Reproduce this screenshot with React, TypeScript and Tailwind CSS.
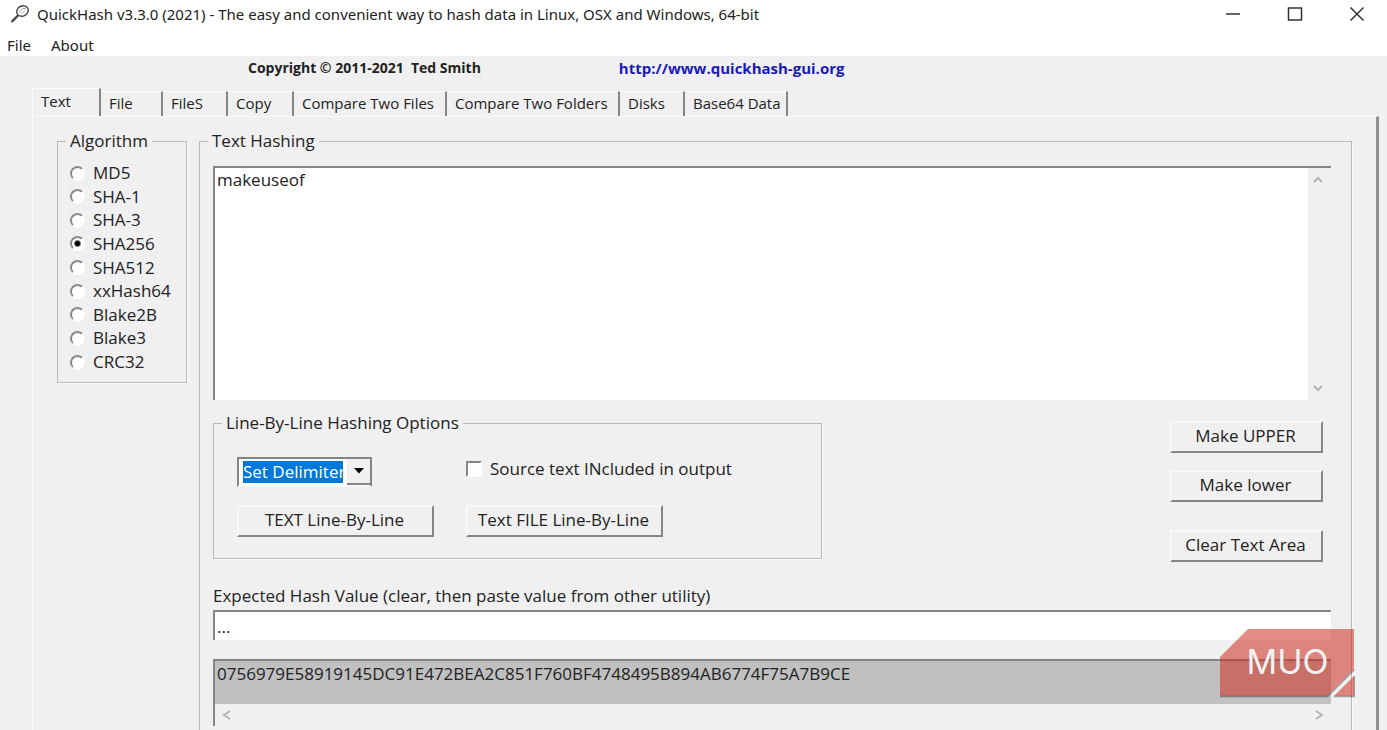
import type { ReactNode } from 'react'

const ALGORITHMS = ['MD5', 'SHA-1', 'SHA-3', 'SHA256', 'SHA512', 'xxHash64', 'Blake2B', 'Blake3', 'CRC32']

// widths are fixed per tab, short labels don't shrink
const TABS = [
  { label: 'File', width: 'w-[62px]' },
  { label: 'FileS', width: 'w-[65px]' },
  { label: 'Copy', width: 'w-[66px]' },
  { label: 'Compare Two Files', width: 'w-[153px]' },
  { label: 'Compare Two Folders', width: 'w-[173px]' },
  { label: 'Disks', width: 'w-[65px]' },
  { label: 'Base64 Data', width: 'w-[103px]' },
]

function Chevron({ d }: { d: string }) {
  return (
    <svg width="12" height="12" viewBox="0 0 12 12" fill="none" stroke="#b4b4b4" strokeWidth="2" aria-hidden="true">
      <path d={d} />
    </svg>
  )
}

function PushButton({ children }: { children: ReactNode }) {
  return (
    <button
      type="button"
      className="h-8 w-full border-2 border-t-[#f8f8f8] border-l-[#f8f8f8] border-r-[#858585] border-b-[#858585] pr-0.5 pb-0.5 text-center leading-5 whitespace-nowrap"
    >
      {children}
    </button>
  )
}

function GroupBox({ title, className, children }: { title: string; className: string; children: ReactNode }) {
  return (
    <fieldset className={`min-w-0 border border-[#b8b8b8] shadow-[1px_1px_0_#fafafa] ${className}`}>
      <legend className="ml-2 px-1 leading-5 whitespace-nowrap">{title}</legend>
      {children}
    </fieldset>
  )
}

function TitleBar() {
  return (
    <header className="bg-white font-['Noto_Sans',sans-serif]">
      <div className="flex h-7 items-center pl-2.5">
        <svg width="20" height="20" viewBox="0 0 20 20" fill="none" stroke="#444" aria-hidden="true">
          <ellipse cx="12.5" cy="7" rx="6" ry="5" transform="rotate(-30 12.5 7)" strokeWidth="1.4" />
          <path d="M9.5 8.5c1-3 4-5 6.500-3.500M12 9.500l3-3" strokeWidth="1" stroke="#999" />
          <path d="M8 11.500L1.500 18" strokeWidth="2.400" />
        </svg>
        <h1 className="ml-[7px] flex-1 text-[15px] leading-5 whitespace-nowrap">
          QuickHash v3.3.0 (2021) - The easy and convenient way to hash data in Linux, OSX and Windows, 64-bit
        </h1>
        <div className="flex pr-[7px]">
          <button type="button" aria-label="Minimize" className="flex w-[62px] justify-end pr-[15px]">
            <svg width="16" height="16" viewBox="0 0 16 16" stroke="#333" strokeWidth="1.500"><path d="M1 8h14" /></svg>
          </button>
          <button type="button" aria-label="Maximize" className="flex w-[62px] justify-end pr-[15px]">
            <svg width="16" height="16" viewBox="0 0 16 16" fill="none" stroke="#333" strokeWidth="1.500"><path d="M1.500 2h13v12h-13z" /></svg>
          </button>
          <button type="button" aria-label="Close" className="flex w-[62px] justify-end pr-[15px]">
            <svg width="16" height="16" viewBox="0 0 16 16" stroke="#333" strokeWidth="1.500"><path d="M1.500 1.500l13 13M14.500 1.500l-13 13" /></svg>
          </button>
        </div>
      </div>
      <nav className="flex h-7 items-center gap-5 pt-1.5 pl-[7px] text-[15px] leading-5">
        <button type="button">File</button>
        <button type="button">About</button>
      </nav>
    </header>
  )
}

function AlgorithmBox() {
  return (
    <GroupBox title="Algorithm" className="w-[130px] shrink-0">
      <div className="flex h-[231px] flex-col justify-between px-3 pt-3 pb-2.5">
        {ALGORITHMS.map((name) => (
          <label key={name} className="flex h-5 items-center gap-2 leading-5">
            <input
              type="radio"
              name="algorithm"
              value={name}
              defaultChecked={name === 'SHA256'}
              className="size-[15px] shrink-0 appearance-none rounded-full border-2 border-t-[#8a8a8a] border-r-white border-b-white border-l-[#8a8a8a] bg-white checked:bg-[radial-gradient(circle,#000_2px,#fff_4px)]"
            />
            {name}
          </label>
        ))}
      </div>
    </GroupBox>
  )
}

function LineOptions() {
  return (
    <GroupBox title="Line-By-Line Hashing Options" className="w-[609px]">
      <div className="grid grid-cols-[197px_197px] gap-x-8 gap-y-[18px] pt-6 pb-[21px] pl-[23px]">
        <div className="flex h-[30px] w-[135px] border-2 border-[#858585] border-b-[#f8f8f8] bg-white">
          <select
            aria-label="Delimiter"
            className="my-0.5 ml-1 h-[22px] w-[100px] appearance-none overflow-hidden bg-[#0078d7] leading-5 whitespace-nowrap text-white"
          >
            <option>Set Delimiter</option>
          </select>
          <span className="pointer-events-none ml-1 flex flex-1 items-center justify-center border-b-2 border-[#858585] bg-[#f0f0f0]">
            <svg width="10" height="6" viewBox="0 0 10 6" aria-hidden="true"><path d="M0 0h10L5 5.500z" fill="#000" /></svg>
          </span>
        </div>
        <label className="flex h-6 items-center gap-2 leading-5 whitespace-nowrap">
          <input
            type="checkbox"
            className="size-4 shrink-0 appearance-none border-2 border-t-[#858585] border-r-white border-b-white border-l-[#858585] bg-white checked:bg-[#0078d7]"
          />
          Source text INcluded in output
        </label>
        <PushButton>TEXT Line-By-Line</PushButton>
        <PushButton>Text FILE Line-By-Line</PushButton>
      </div>
    </GroupBox>
  )
}

function TextHashing() {
  return (
    <GroupBox title="Text Hashing" className="flex-1 border-b-0">
      <div className="pt-[15px] pr-5 pl-[13px]">
        <div className="flex h-[234px] border-t-2 border-l-2 border-[#858585] bg-white">
          <textarea
            aria-label="Text to hash"
            defaultValue="makeuseof"
            className="flex-1 resize-none bg-white px-0.5 py-0.5 leading-5 outline-none"
          />
          <div className="flex w-[23px] flex-col items-center justify-between bg-[#f0f0f0] py-1.5 pr-1">
            <Chevron d="M2 8l4-4 4 4" />
            <Chevron d="M2 4l4 4 4-4" />
          </div>
        </div>

        <div className="mt-[13px] flex items-start justify-between">
          <LineOptions />
          <div className="mr-2 flex w-[153px] flex-col pt-2">
            <PushButton>Make UPPER</PushButton>
            <div className="mt-[17px]"><PushButton>Make lower</PushButton></div>
            <div className="mt-7"><PushButton>Clear Text Area</PushButton></div>
          </div>
        </div>

        <div className="mt-6 flex flex-col">
          <label htmlFor="expected" className="leading-5">
            Expected Hash Value (clear, then paste value from other utility)
          </label>
          <input
            id="expected"
            type="text"
            defaultValue="..."
            className="mt-1 h-[30px] border-t-2 border-l-2 border-[#858585] bg-white px-0.5 leading-5 outline-none"
          />
        </div>

        <div className="mt-[19px] border-t-2 border-l-2 border-[#858585]">
          <output className="block h-[43px] bg-[#c0c0c0] px-0.5 py-[3px] leading-5">
            0756979E58919145DC91E472BEA2C851F760BF4748495B894AB6774F75A7B9CE
          </output>
          <div className="flex h-[22px] items-center justify-between px-1.5">
            <Chevron d="M9 2L3 6l6 4" />
            <Chevron d="M3 2l6 4-6 4" />
          </div>
        </div>
      </div>
    </GroupBox>
  )
}

function Watermark() {
  return (
    <div className="absolute right-8 bottom-8 flex h-[69px] w-[135px] items-center justify-center">
      <svg className="absolute inset-0" width="135" height="69" viewBox="0 0 135 69" fill="none" aria-hidden="true">
        <path d="M0 28L28 0h106v40l-27 27H0zM134 47v20h-20z" fill="rgb(205,44,31)" fillOpacity="0.55" />
        <path d="M0 67.500h107.500L134.500 40.500M114 67.500h20.500V47" stroke="#000" strokeOpacity="0.35" strokeWidth="1.500" />
      </svg>
      <span className="relative pb-1 font-[Inter,sans-serif] text-[34px] leading-[64px] font-normal text-[#f2f2f2]">MUO</span>
    </div>
  )
}

export default function App() {
  return (
    <div className="relative flex h-screen flex-col overflow-hidden bg-[#f0f0f0] font-['Open_Sans',sans-serif] text-[17px] text-[#222]">
      <TitleBar />
      <div className="flex h-8 shrink-0 gap-[138px] pt-0.5 pl-[248px] leading-5 font-bold whitespace-pre">
        <p className="text-[14px]">Copyright © 2011-2021  Ted Smith</p>
        <a href="http://www.quickhash-gui.org" className="text-[15px] text-[#1a1ab8]">http://www.quickhash-gui.org</a>
      </div>

      <main className="flex flex-1 flex-col pr-2 pl-8">
        <div role="tablist" className="flex h-7 items-end text-[15px]">
          <button
            type="button"
            role="tab"
            aria-selected="true"
            className="h-7 w-[69px] border-t border-r-2 border-l border-t-[#fafafa] border-r-[#858585] border-l-[#fafafa] pb-1 pl-2 text-left leading-5"
          >
            Text
          </button>
          {TABS.map((tab) => (
            <button
              key={tab.label}
              type="button"
              role="tab"
              aria-selected="false"
              className={`h-[25px] shrink-0 border-t border-r-2 border-t-[#fafafa] border-r-[#858585] pb-0.5 pl-2 text-left leading-5 whitespace-nowrap ${tab.width}`}
            >
              {tab.label}
            </button>
          ))}
        </div>
        <div role="tabpanel" className="flex flex-1 items-start gap-3 border-t border-r-3 border-l border-t-[#fafafa] border-r-[#8f8f8f] border-l-[#fafafa] px-6 pt-3.5">
          <AlgorithmBox />
          <div className="flex min-w-0 flex-1 self-stretch">
            <TextHashing />
          </div>
        </div>
      </main>
      <Watermark />
    </div>
  )
}
